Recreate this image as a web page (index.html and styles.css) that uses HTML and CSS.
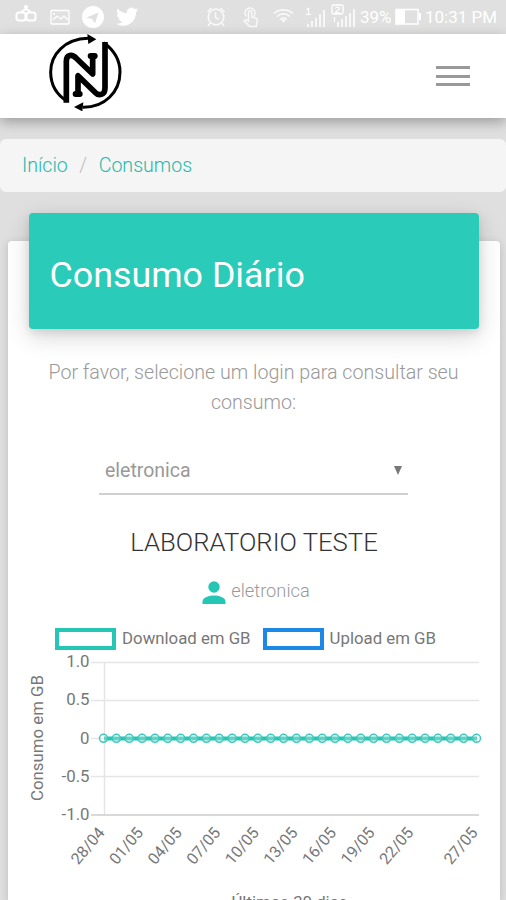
FILE: index.html
```html
<!DOCTYPE html>
<html lang="pt-BR">
<head>
  <meta charset="UTF-8" />
  <meta name="viewport" content="width=device-width, initial-scale=1" />
  <title>Consumo Diário</title>
  <link rel="stylesheet" href="styles.css">
</head>
<body>
  <div class="status">
    <svg class="status-left" width="140" height="34" viewBox="0 0 140 34">
      <g fill="none" stroke="#fff" stroke-width="2">
        <rect x="16.500" y="12.500" width="9" height="8" rx="2.500" />
        <rect x="26.500" y="12.500" width="9" height="8" rx="2.500" />
        <path d="M21 12l5-3 5 3M26 9V6" />
      </g>
      <circle cx="26" cy="7" r="2" fill="#fff" />
      <g fill="none" stroke="#fff" stroke-width="1.300">
        <rect x="51" y="10.500" width="18" height="13.500" rx="1" />
        <path d="M53 20l4-4 4 3 3-3 4 4M53 14h2" />
      </g>
      <circle cx="93" cy="17" r="11" fill="#fff" />
      <path d="M86.500 17.500l12-5-3.500 11-3-4.500z" fill="#e0e0e0" />
      <path transform="translate(116 5.500) scale(.93)" fill="#fff" d="M23.950 4.570a10 10 0 0 1-2.820.77 4.960 4.960 0 0 0 2.160-2.720c-.95.550-2 .95-3.130 1.180a4.920 4.920 0 0 0-8.380 4.480C7.690 8.100 4.070 6.130 1.640 3.160a4.820 4.820 0 0 0-.67 2.480c0 1.710.87 3.210 2.190 4.100a4.900 4.900 0 0 1-2.230-.62v.06a4.920 4.920 0 0 0 3.950 4.830 5 5 0 0 1-2.210.08 4.940 4.940 0 0 0 4.600 3.420A9.870 9.870 0 0 1 0 19.540a13.990 13.990 0 0 0 7.550 2.210c9.050 0 14-7.500 14-13.980 0-.21 0-.42-.02-.63a9.940 9.940 0 0 0 2.420-2.570z" />
    </svg>
    <div class="status-right">
      <svg width="150" height="34" viewBox="206 0 150 34" fill="none" stroke="#fff">
        <g opacity="0.8">
          <circle cx="216" cy="17" r="7.800" stroke-width="1.700" />
          <path stroke-width="1.500" d="M215.500 12v5.500l3.500 2M207.500 12l4-4M224.500 12l-4-4M210 23l-2 3M222 23l2 3" />
          <path stroke-width="1.500" d="M246.500 16.500a5 5 0 1 1 7 0M248.500 21v-9a1.600 1.600 0 0 1 3.200 0v5l4 1c1.500.500 1.800 1.500 1.500 3l-1 5.500h-6.500l-5.500-5.500c.500-1.500 2-1.500 4.300 0z" />
          <path stroke-width="1.700" d="M274 13.500a14 14 0 0 1 19 0M277 16.500a9.500 9.500 0 0 1 13 0M280 19.500a5 5 0 0 1 7 0" />
        </g>
        <path d="M281 19.500h5l-2.500 3z" fill="#fff" stroke="none" />
        <path stroke-width="1.200" d="M306.500 9.500l2-1v6M306 14.500h5" />
        <path stroke-width="1.800" opacity="0.8" d="M308 27v-3M312 27v-6M316 27v-9M320 27V14M324 27V10M338 27v-5M342 27v-8M346 27v-11M350 27V13M354 27V9" />
        <rect x="332" y="5" width="11" height="9" rx="1.500" stroke-width="1.300" />
        <path stroke-width="1.200" d="M335.500 8.500c0-2 4-2 4 0 0 1.500-4 2-4 4h4.500M334.500 17v5" />
      </svg>
      <span class="battery-text">39%</span>
      <svg width="27" height="18" viewBox="0 0 27 18">
        <rect x="1" y="1.500" width="22" height="14.500" fill="none" stroke="#fff" stroke-width="1.500" />
        <path d="M1 1.500h9V16H1zM24 5h2v7h-2z" fill="#fff" />
      </svg>
      <span class="clock">10:31 PM</span>
    </div>
  </div>

  <nav class="navbar">
    <svg class="logo" width="74" height="77" viewBox="144 102 222 231">
      <g fill="none" stroke="#000" stroke-linejoin="round">
        <path stroke-width="9" d="M202 304C166 282 152 252 152 216c0-53 42-99 112-101" />
        <path stroke-width="9" d="M311 128c31 22 49 51 49 88 0 60-46 107-112 106" />
        <path stroke-width="17" d="M199 308V184c0-21 18-22 29-10l50 48v-52" />
        <path stroke-width="17" d="M315 126v138c0 22-19 25-30 13l-51-50v56" />
      </g>
      <path d="M262 102l27 16-24 14zM250 307l-28 14 25 13z" />
      <rect x="263" y="159" width="30" height="18" rx="9" />
      <rect x="218" y="273" width="30" height="18" rx="9" />
    </svg>
    <div class="menu">
      <span></span>
      <span></span>
      <span></span>
    </div>
  </nav>

  <div class="breadcrumb">
    <a>Início</a>
    <span>/</span>
    <a>Consumos</a>
  </div>

  <div class="card">
    <div class="card-header">
      <h1>Consumo Diário</h1>
    </div>

    <p class="info">Por favor, selecione um login para consultar seu<br>consumo:</p>

    <div class="select">
      <span>eletronica</span>
      <svg width="8" height="9" viewBox="0 0 8 9"><path d="M0 0h8L4 9z" fill="#777" /></svg>
    </div>

    <h2>LABORATORIO TESTE</h2>

    <div class="user">
      <svg width="24" height="24" viewBox="0 0 24 24" fill="#26c6b4">
        <circle cx="12" cy="6" r="5.700" />
        <path d="M.500 23v-2.500c0-4.200 7-6 11.500-6s11.500 1.800 11.500 6V23z" />
      </svg>
      <span>eletronica</span>
    </div>

    <div class="legend">
      <i class="box download"></i>
      <span>Download em GB</span>
      <i class="box upload"></i>
      <span>Upload em GB</span>
    </div>

    <svg id="grafico" class="chart" width="492" height="250" viewBox="8 650 492 250">
      <g class="grid">
        <path d="M91 662.500h388M91 700.500h388M91 738.500h388M91 776.500h388M104.500 662v153" />
        <path class="axis" d="M91 815h388" />
      </g>
      <g class="ticks">
        <text x="89.500" y="667">1.0</text>
        <text x="89.500" y="705">0.5</text>
        <text x="89.500" y="743.500">0</text>
        <text x="89.500" y="781.500">-0.5</text>
        <text x="89.500" y="820">-1.0</text>
      </g>
      <text class="title" transform="translate(42.500 738) rotate(-90)">Consumo em GB</text>
      <path class="line" d="M104 738.500h373" />
      <text class="title" x="289.500" y="908">Últimos 30 dias</text>
    </svg>
  </div>

  <script>
    const grafico = document.getElementById("grafico");
    const ns = "http://www.w3.org/2000/svg";
    const total = 30;
    const labels = {
      0: "28/04", 3: "01/05", 6: "04/05", 9: "07/05", 12: "10/05",
      15: "13/05", 18: "16/05", 21: "19/05", 24: "22/05", 29: "27/05"
    };

    for (let i = 0; i < total; i++) {
      const x = 103.5 + i * (373 / (total - 1));

      const ponto = document.createElementNS(ns, "circle");
      ponto.setAttribute("class", "point");
      ponto.setAttribute("cx", x);
      ponto.setAttribute("cy", 738.3);
      ponto.setAttribute("r", 4);
      grafico.appendChild(ponto);

      if (labels[i]) {
        const texto = document.createElementNS(ns, "text");
        texto.setAttribute("class", "date");
        texto.setAttribute("transform", `translate(${x + 2} 833) rotate(-50)`);
        texto.textContent = labels[i];
        grafico.appendChild(texto);
      }
    }
  </script>
</body>
</html>
```

FILE: styles.css
```css
* {
  box-sizing: border-box;
}

body {
  margin: 0;
  height: 900px;
  overflow: hidden;
  background-color: #dfdfdf;
  font-family: Roboto, "Liberation Sans", sans-serif;
  font-weight: 300;
  color: #999;
}

.status {
  height: 34px;
  display: flex;
  justify-content: space-between;
  background-color: #e0e0e0;
  color: #fff;
}

.status-right {
  display: flex;
  align-items: center;
  padding-right: 10px;
  font-size: 17px;
  font-weight: 400;
}

.battery-text {
  width: 35px;
  margin-left: 4px;
}

.clock {
  width: 71px;
  margin-left: 3px;
  white-space: nowrap;
}

.navbar {
  height: 84px;
  display: flex;
  justify-content: space-between;
  padding: 0 36px 0 48px;
  background-color: #fff;
  box-shadow: 0 4px 12px rgba(0, 0, 0, 0.3);
}

.menu {
  width: 34px;
  padding-top: 32px;
}

.menu span {
  display: block;
  height: 3px;
  margin-bottom: 5.5px;
  background-color: #999;
}

.breadcrumb {
  height: 53px;
  margin-top: 21px;
  padding-left: 22px;
  display: flex;
  align-items: center;
  border-radius: 6px;
  background-color: #f5f5f5;
  font-size: 19.6px;
}

.breadcrumb a {
  color: #26b8aa;
}

.breadcrumb span {
  margin: 0 11.5px;
  color: #bbb;
}

.card {
  margin: 49px 6px 0 8px;
  height: 659px;
  border-radius: 4px 4px 0 0;
  background-color: #fff;
  box-shadow: 0 2px 8px rgba(0, 0, 0, 0.16);
  display: flex;
  flex-direction: column;
  align-items: center;
}

.card-header {
  width: 450px;
  height: 116px;
  flex-shrink: 0;
  margin: -28px 1px 0 0;
  padding: 0 21px;
  display: flex;
  align-items: center;
  border-radius: 4px;
  background-color: #2bcbba;
  box-shadow: 0 8px 24px rgba(0, 0, 0, 0.16), 0 3px 8px rgba(0, 0, 0, 0.1);
}

h1 {
  margin: 7px 0 0;
  font-size: 35.8px;
  font-weight: 400;
  color: #fff;
}

.info {
  margin: 29px 1px 0 0;
  font-size: 19.65px;
  line-height: 30px;
  text-align: center;
  white-space: nowrap;
}

.select {
  width: 309px;
  height: 48px;
  margin: 29px 1px 0 0;
  padding: 0 6px;
  display: flex;
  align-items: center;
  justify-content: space-between;
  border-bottom: 2px solid #d0d0d0;
  font-size: 19.5px;
  font-weight: 400;
}

h2 {
  margin: 31px 0 0;
  font-size: 25.7px;
  line-height: 32px;
  font-weight: 300;
  color: #333;
}

.user {
  height: 24px;
  margin-top: 23px;
  margin-left: 4px;
  display: flex;
  gap: 5px;
  font-size: 18.3px;
  line-height: 19px;
}

.legend {
  height: 22px;
  margin-top: 23px;
  margin-right: 17px;
  display: flex;
  align-items: center;
  font-size: 16.8px;
  line-height: 18px;
  font-weight: 400;
  color: #777;
}

.legend span {
  margin-top: -2px;
}

.box {
  width: 61px;
  height: 22px;
  margin-right: 6px;
  border: 4px solid #26c6b4;
}

.upload {
  margin-left: 12px;
  border-color: #1e88e5;
}

.chart {
  flex-shrink: 0;
  font-size: 16.8px;
  font-weight: 400;
}

.chart text {
  fill: #777;
}

.grid path {
  fill: none;
  stroke: #e5e5e5;
  stroke-width: 1.5;
}

.grid .axis {
  stroke: #ccc;
}

.ticks,
.date {
  text-anchor: end;
}

.date {
  font-size: 16px;
}

.title {
  text-anchor: middle;
}

.line {
  stroke: #26c6b4;
  stroke-width: 4;
}

.point {
  fill: rgba(255, 255, 255, 0.25);
  stroke: #3cc9ba;
  stroke-width: 1.5;
}
```
